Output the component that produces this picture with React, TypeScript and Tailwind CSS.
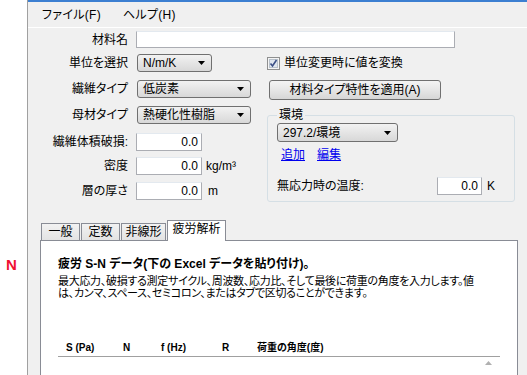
import type { ReactNode } from "react";

const jp = "font-['Liberation_Sans','Noto_Sans_CJK_JP',sans-serif]";

function Arrow() {
  return (
    <svg width="7" height="4" viewBox="0 0 7 4" className="shrink-0">
      <path d="M0 0h7L3.5 4z" fill="#000" />
    </svg>
  );
}

function Select({ value, className }: { value: string; className: string }) {
  return (
    <div
      className={`flex items-center justify-between rounded-[3px] border border-[#707070] bg-gradient-to-b from-[#f2f2f2] to-[#d8d8d8] pl-[5px] pr-[6px] text-[12px] ${className}`}
    >
      <span className="leading-none">{value}</span>
      <Arrow />
    </div>
  );
}

function NumInput({ className = "w-[66px]" }: { className?: string }) {
  return (
    <div
      className={`flex h-[18px] items-center justify-end border border-[#abadb3] border-t-[#e3e9ef] bg-white pr-[3px] text-[12px] leading-none ${className}`}
    >
      0.0
    </div>
  );
}

function Row({ label, mt, children }: { label: string; mt: string; children: ReactNode }) {
  return (
    <div className={`flex h-[18px] items-center ${mt}`}>
      <div className="w-[100px] pr-0 text-right text-[12px] leading-none">{label}</div>
      <div className="ml-[8px] flex items-center gap-[4px]">{children}</div>
    </div>
  );
}

function Tab({ label, active, w }: { label: string; active?: boolean; w: string }) {
  if (active) {
    return (
      <div
        className={`relative z-10 -mb-px flex h-[21px] items-start justify-center border border-b-0 border-[#898c95] bg-white pt-[2px] text-[12px] leading-none ${w}`}
      >
        {label}
      </div>
    );
  }
  return (
    <div
      className={`flex h-[17px] items-center justify-center border border-b-0 border-[#898c95] bg-gradient-to-b from-[#f2f2f2] to-[#e3e3e3] text-[12px] leading-none ${w}`}
    >
      {label}
    </div>
  );
}

export default function App() {
  return (
    <div className={`flex h-[375px] w-[527px] overflow-hidden bg-white text-black ${jp} [font-feature-settings:'palt']`}>
      <div className="flex w-[27px] shrink-0 flex-col items-start pl-[6px] pt-[257px]">
        <span className="font-['Liberation_Sans',sans-serif] text-[15px] font-bold leading-none text-[#f01030]">N</span>
      </div>
      <div className="flex flex-1 flex-col border-l border-[#a0a0a0] bg-[#f0f0f0]">
        {/* menu */}
        <div className="flex h-[28px] items-center gap-[22px] border-t-2 border-b border-t-[#3c7fd1] border-b-white pl-[14px] text-[12px] tracking-[0.3px]">
          <span>ファイル(F)</span>
          <span>ヘルプ(H)</span>
        </div>

        {/* name row */}
        <div className="mt-[3px] flex h-[17px] items-center">
          <div className="w-[100px] text-right text-[12px] leading-none">材料名</div>
          <div className="ml-[8px] h-[17px] w-[319px] border border-[#abadb3] border-t-[#e3e9ef] bg-white" />
        </div>

        <div className="mt-[6px] flex">
          {/* left column */}
          <div className="flex w-[238px] flex-col">
            <Row label="単位を選択" mt="mt-0">
              <Select value="N/m/K" className="ml-px h-[18px] w-[75px]" />
            </Row>
            <Row label="繊維タイプ" mt="mt-[8px]">
              <Select value="低炭素" className="ml-px h-[18px] w-[114px]" />
            </Row>
            <Row label="母材タイプ" mt="mt-[8px]">
              <Select value="熱硬化性樹脂" className="ml-px h-[18px] w-[114px]" />
            </Row>
            <Row label="繊維体積破損:" mt="mt-[9px]">
              <NumInput />
            </Row>
            <Row label="密度" mt="mt-[6px]">
              <NumInput />
              <span className="text-[12px] leading-none">kg/m³</span>
            </Row>
            <Row label="層の厚さ" mt="mt-[7px]">
              <NumInput />
              <span className="ml-[2px] text-[12px] leading-none">m</span>
            </Row>
          </div>

          {/* right column */}
          <div className="flex flex-col pl-px">
            <div className="flex h-[18px] items-center gap-[4px] text-[12px] leading-none">
              <svg width="13" height="13" viewBox="0 0 13 13">
                <rect x="0.5" y="0.5" width="12" height="12" fill="#f4f4f4" stroke="#8e8f8f" />
                <rect x="2.5" y="2.5" width="8" height="8" fill="#dfe6ee" stroke="#b8c1cb" />
                <path d="M3.5 6.5l2 2.5 4-6" fill="none" stroke="#3b4f86" strokeWidth="1.6" />
              </svg>
              <span>単位変更時に値を変換</span>
            </div>
            <div className="mt-[8px] ml-[2px] flex h-[20px] w-[172px] items-center justify-center rounded-[3px] border border-[#707070] bg-gradient-to-b from-[#f4f4f4] via-[#e6e6e6] to-[#d6d6d6] text-[12px] leading-none">
              材料タイプ特性を適用(A)
            </div>
            <fieldset className="mt-[8px] h-[94px] w-[248px] rounded-[3px] border border-[#d5dfe5] px-[9px] pt-0">
              <legend className="px-[2px] text-[12px] leading-[14px]">環境</legend>
              <Select value="297.2/環境" className="mt-[1px] h-[19px] w-[121px]" />
              <div className="mt-[7px] flex gap-[12px] pl-[4px] text-[12px] leading-none text-[#0000ee]">
                <span className="underline">追加</span>
                <span className="underline">編集</span>
              </div>
              <div className="mt-[16px] flex items-center">
                <span className="w-[160px] text-[12px] leading-none">無応力時の温度:</span>
                <NumInput className="w-[45px]" />
                <span className="ml-[5px] text-[12px] leading-none">K</span>
              </div>
            </fieldset>
          </div>
        </div>

        {/* tabs */}
        <div className="mt-[18px] ml-[12px] flex items-end gap-[1px] pl-px">
          <Tab label="一般" w="w-[39px]" />
          <Tab label="定数" w="w-[39px]" />
          <Tab label="非線形" w="w-[45px]" />
          <Tab label="疲労解析" w="w-[59px]" active />
        </div>
        <div className="ml-[12px] mr-[9px] flex flex-1 flex-col border border-b-0 border-[#898c95] bg-white pl-[17px] pr-[17px]">
          <div className="mt-[17px] text-[12px] font-bold leading-none">
            疲労 S-N データ(下の Excel データを貼り付け)。
          </div>
          <div className="mt-[5px] whitespace-nowrap text-[11px] leading-[12px] tracking-[-0.3px]">
            最大応力、破損する測定サイクル、周波数、応力比、そして最後に荷重の角度を入力します。値
            <br />
            は、カンマ、スペース、セミコロン、またはタブで区切ることができます。
          </div>
          <div className="mt-[44px] flex h-[14px] items-center border-b border-[#a0a0a0] pb-[3px] text-[10px] font-bold leading-none">
            <span className="ml-[8px] w-[57px]">S (Pa)</span>
            <span className="w-[38px]">N</span>
            <span className="w-[61px]">f (Hz)</span>
            <span className="w-[35px]">R</span>
            <span>荷重の角度(度)</span>
          </div>
          <div className="flex justify-end pr-[8px] pt-[4px]">
            <svg width="7" height="4" viewBox="0 0 7 4">
              <path d="M0 4h7L3.5 0z" fill="#b0b0b0" />
            </svg>
          </div>
        </div>
      </div>
    </div>
  );
}
